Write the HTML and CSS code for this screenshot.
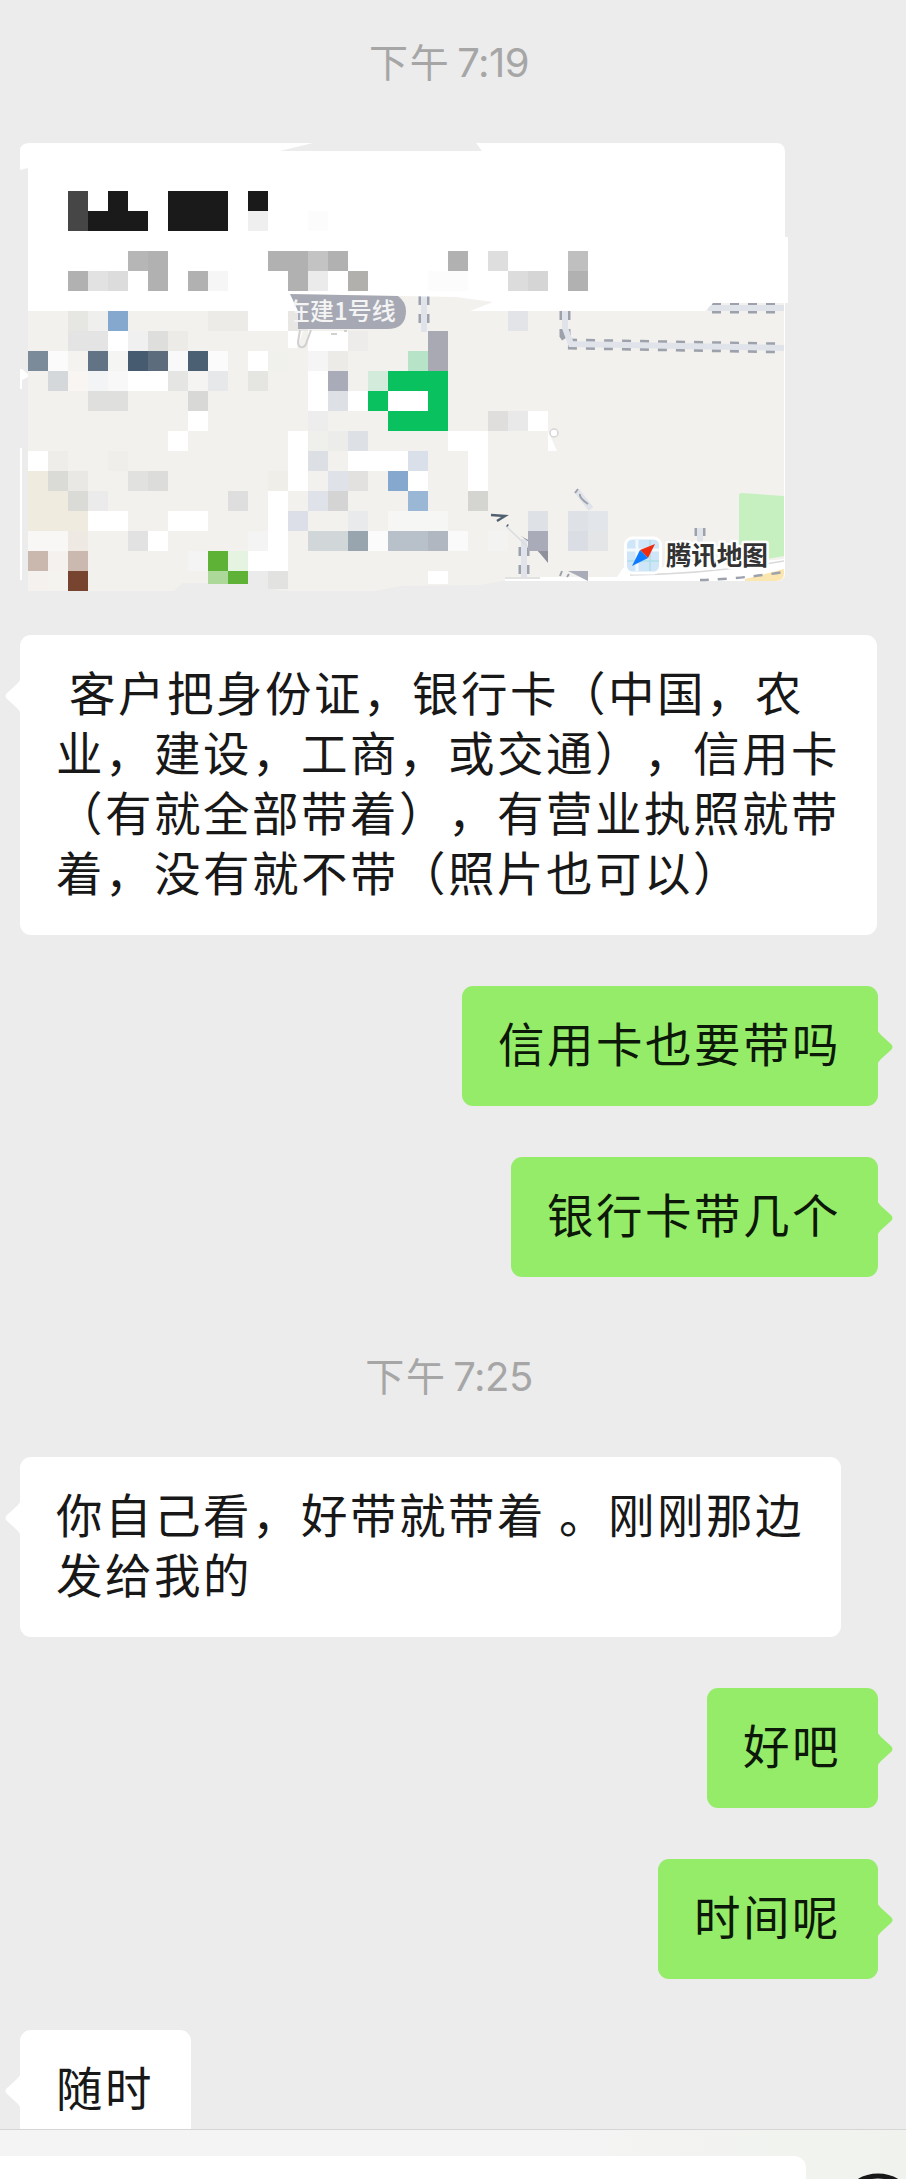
FILE: index.html
```html
<!DOCTYPE html>
<html lang="zh-CN">
<head>
  <meta charset="UTF-8" />
  <title>聊天</title>
  <meta name="viewport" content="width=device-width, initial-scale=1" />
  <link rel="stylesheet" href="styles.css">
</head>
<body>
  <div class="chat">
    <div class="time">下午 <span>7:19</span></div>

    <svg class="location" viewBox="0 143 906 448">
      <!-- map base -->
      <path fill="#fff" d="M20 369h2l8 7-8 4v9h-2zM20 448h2v132h-2zM770 300h15v273q0 8-8 8h-7z"/>
      <path fill="#f2f1ed" d="M28 290H784V573q0 8-8 8H503L480 585L400 586L376 591H288L275 590L268 583H182L174 591H28z"/>
      <path fill="#c7f0c0" d="M739 495q0-2 3-2l42 3v60l-45 8z"/>
      <path fill="#fff" d="M505 577h112l6-9q80 0 161-9v14q0 8-8 8H505z"/>
      <path fill="none" stroke="#d9d9d9" stroke-width="1.5" d="M505 578h35M630 575q80-1 154-14"/>
      <path fill="#fbe6b0" d="M745 579l39-10v4q0 8-8 8h-31z"/>
      <path fill="none" stroke="#9da1ab" stroke-width="2.5" stroke-dasharray="9 9" d="M700 580q40-1 84-8"/>
      <g class="rail-edge">
        <path d="M568 344L784 348"/><path d="M712 308h72"/><path d="M565 311v24l4 6"/>
        <path d="M424 296v36"/><path d="M524 547v30"/><path d="M700 528v8"/>
      </g>
      <g class="rail">
        <path d="M784 348L571 344L565 328V311"/><path d="M708 308h76"/>
        <path d="M424 296v36"/><path d="M524 539v38"/><path d="M700 528v14"/><path d="M577 491l14 18"/>
      </g>
      <path fill="none" stroke="#9da1ab" stroke-width="2" d="M575 493l3-4M580 494q-1 4 8 10M560 576l2-5M567 577l2-3"/>
      <path fill="#8e919c" d="M521 536q12 8 27 27v-12z"/>
      <path fill="none" stroke="#d9dce0" stroke-width="1.5" d="M506 526l25 24"/>
      <path fill="#a9acb8" d="M568 571h20v10z"/>
      <path fill="#fff" d="M548 431l9 20h-9z"/>
      <circle cx="554" cy="433" r="4" fill="#fff" stroke="#d5d5d5" stroke-width="1.5"/>
      <path fill="#fff" d="M288 331h15l-6 17h-9z"/>

      <!-- header of the card -->
      <path fill="#fff" d="M20 151q0-8 10-8H313L280 151H482L476 143H776q9 0 9 9V237h3v66H713L705 311H470L493 302L456 297L290 294L297 306L298 311H28V168L20 170z"/>
      <g id="mosaic"></g>

      <path fill="#a6a9b3" d="M290 294L398 296Q406 302 406 311Q406 329 387 329H298L298 311z"/>
      <svg x="294" y="290" width="120" height="40"><text class="line-name" x="-8" y="29.5">在建1号线</text></svg>
      <path fill="none" stroke="#d0d0d0" stroke-width="2" d="M300 330l-2 12q0 6 5 5q3-1 4-6l4-11M331 334h6M344 331h3"/>
      <path fill="none" stroke="#50606f" stroke-width="2.5" d="M491 515l14 1-8 5M507 525l1 1"/>

      <!-- map vendor mark -->
      <rect x="625.5" y="538" width="35" height="35" rx="7" fill="#cfe5f8" stroke="#fff" stroke-width="3"/>
      <path fill="none" stroke="#f3fafd" stroke-width="3" d="M637 540v31M627 550h32"/>
      <path fill="none" stroke="#aee0e6" stroke-width="1.5" d="M650 540v31M627 561h32"/>
      <path fill="#ef2b10" d="M655 544L648 558L640 550z"/>
      <path fill="#0d7bff" d="M632 566L640 550L648 558z"/>
      <text class="vendor" x="666" y="565" textLength="102">腾讯地图</text>
    </svg>

    <div class="msg left"><svg class="tail" viewBox="0 0 16 36"><path d="M16 0Q15 3 12 6L2 15Q-1 18 2 21L12 30Q15 33 16 36z"/></svg>&nbsp;客户把身份证，银行卡（中国，农<br>业，建设，工商，或交通），信用卡<br>（有就全部带着），有营业执照就带<br>着，没有就不带（照片也可以）</div>
    <div class="msg right"><svg class="tail" viewBox="0 0 16 36"><path d="M16 0Q15 3 12 6L2 15Q-1 18 2 21L12 30Q15 33 16 36z"/></svg>信用卡也要带吗</div>
    <div class="msg right"><svg class="tail" viewBox="0 0 16 36"><path d="M16 0Q15 3 12 6L2 15Q-1 18 2 21L12 30Q15 33 16 36z"/></svg>银行卡带几个</div>

    <div class="time">下午 <span>7:25</span></div>

    <div class="msg left"><svg class="tail" viewBox="0 0 16 36"><path d="M16 0Q15 3 12 6L2 15Q-1 18 2 21L12 30Q15 33 16 36z"/></svg>你自己看，好带就带着&nbsp;。刚刚那边<br>发给我的</div>
    <div class="msg right"><svg class="tail" viewBox="0 0 16 36"><path d="M16 0Q15 3 12 6L2 15Q-1 18 2 21L12 30Q15 33 16 36z"/></svg>好吧</div>
    <div class="msg right"><svg class="tail" viewBox="0 0 16 36"><path d="M16 0Q15 3 12 6L2 15Q-1 18 2 21L12 30Q15 33 16 36z"/></svg>时间呢</div>
    <div class="msg left"><svg class="tail" viewBox="0 0 16 36"><path d="M16 0Q15 3 12 6L2 15Q-1 18 2 21L12 30Q15 33 16 36z"/></svg>随时</div>
  </div>

  <div class="toolbar">
    <div class="field"></div>
    <svg class="emoji" viewBox="0 0 80 80"><circle cx="40" cy="40" r="37" fill="none" stroke="#181818" stroke-width="5"/></svg>
  </div>

  <script>
    // row -> [column, number of cells, color, height]
    const rows = {
      0: [[2,1,'#464646'],[4,1,'#1a1a1a'],[7,3,'#1a1a1a'],[11,1,'#1a1a1a']],
      1: [[2,1,'#464646'],[3,3,'#1a1a1a'],[7,3,'#1a1a1a'],[11,1,'#efefef'],[14,1,'#fcfcfc']],
      3: [[5,1,'#b6b6b6'],[6,1,'#b1b1b1'],[12,2,'#b1b1b1'],[14,1,'#c3c3c3'],[15,1,'#b1b1b1'],[21,1,'#b1b1b1'],[23,1,'#dedede'],[27,1,'#bfbfbf']],
      4: [[2,1,'#b1b1b1'],[3,1,'#e2e2e2'],[4,1,'#dcdcdc'],[6,1,'#b1b1b1'],[8,1,'#b1b1b1'],[9,1,'#f6f6f6'],[13,1,'#b1b1b1'],[14,1,'#ebebeb'],[16,1,'#b1b0ad'],[20,2,'#fcfcfc'],[24,1,'#dcdcdc'],[25,1,'#d5d5d5'],[27,1,'#b1b1b1']],
      6: [[2,1,'#e6e6e2'],[3,1,'#efefee'],[4,1,'#85a8ce'],[9,2,'#ecebe7'],[11,2,'#fff'],[13,1,'#e8e7e4'],[24,1,'#e2e4e8']],
      7: [[2,2,'#e4e4e4'],[4,1,'#fff'],[5,1,'#f0f0f0'],[6,1,'#dededd'],[7,1,'#ecebe8'],[14,2,'#fff'],[16,1,'#edecea'],[20,1,'#a9a9b3']],
      8: [[0,1,'#7c8b9a'],[1,1,'#fbfbfb'],[2,1,'#f4f3f0'],[3,1,'#617384'],[4,1,'#f5f5f4'],[5,1,'#465b70'],[6,1,'#5c6c7c'],[7,1,'#f9f9f9'],[8,1,'#4c6074'],[9,1,'#fbfbfb'],[11,1,'#fff'],[12,1,'#f0f0ed'],[14,1,'#f5f5f5'],[15,1,'#ecebe8'],[19,1,'#b7e4c9'],[20,1,'#a9a9b3']],
      9: [[1,1,'#d5d8da'],[2,1,'#f8f5f3'],[3,1,'#f3f4f6'],[4,1,'#f8f8f8'],[5,2,'#fff'],[7,1,'#e5e5e4'],[8,1,'#f5f4f2'],[9,1,'#e6e8ea'],[11,1,'#e5e5e1'],[14,1,'#fff'],[15,1,'#a9acb8'],[17,1,'#d2ebdb'],[18,3,'#0ac160']],
      10: [[3,2,'#dfdfdd'],[8,1,'#d8d8d7'],[14,1,'#fff'],[15,1,'#dde1e6'],[16,1,'#fff'],[17,1,'#0ac160'],[18,2,'#fff'],[20,1,'#0ac160']],
      11: [[8,1,'#fff'],[14,1,'#ededed'],[18,3,'#0ac160'],[23,1,'#dfdedd'],[24,1,'#e9e9e9'],[25,1,'#fff']],
      12: [[7,1,'#fff'],[13,1,'#fff'],[14,1,'#efefec'],[15,1,'#ececea'],[16,1,'#dde0e5'],[21,2,'#fff']],
      13: [[0,1,'#fff'],[1,1,'#eeede9'],[4,1,'#efeeea'],[13,1,'#fff'],[14,1,'#dce0e4'],[16,3,'#fff'],[19,1,'#dae0ea'],[22,1,'#fff']],
      14: [[0,1,'#efebdf'],[1,1,'#dadad6'],[2,1,'#e9e8e5'],[5,1,'#e1e1e0'],[6,1,'#dcdcda'],[12,1,'#efeee9'],[13,1,'#fff'],[15,1,'#dfe2e8'],[16,1,'#e2e1df'],[18,1,'#85a8ce'],[19,1,'#fff'],[22,1,'#fff']],
      15: [[0,2,'#efebdf'],[2,1,'#dadad6'],[3,1,'#ebebeb'],[10,1,'#dedede'],[12,1,'#fff'],[14,1,'#dfe2e8'],[15,1,'#d5d4d4'],[19,1,'#9bb7d6'],[22,1,'#d4d4d1']],
      16: [[0,3,'#efebdf'],[3,2,'#fff'],[7,2,'#fff'],[12,1,'#fff'],[13,1,'#dcdfe8'],[16,1,'#e8eaec'],[18,3,'#f6f6f4'],[25,1,'#dee1e6'],[27,1,'#dee1e6'],[28,1,'#e2e5e9']],
      17: [[0,2,'#f8f7f5'],[2,1,'#efe9e4'],[5,1,'#e2e2e2'],[6,1,'#fff'],[11,1,'#f4f4f4'],[12,1,'#fff'],[14,2,'#d1d6d9'],[16,1,'#98a4ae'],[17,1,'#fbfbfb'],[18,2,'#b8c0c9'],[20,1,'#b1b7c0'],[21,1,'#fafafa'],[23,1,'#f3f3f2'],[25,1,'#a9acb8'],[27,1,'#dadde3'],[28,1,'#e4e5e7']],
      18: [[0,1,'#cab8ae'],[1,1,'#f4f1ee'],[2,1,'#cbb9af'],[8,1,'#f4f4f4'],[9,1,'#5eb336'],[10,1,'#e4f4e0'],[11,2,'#fff']],
      19: [[0,1,'#f4f1ee'],[1,1,'#f5f3f0'],[2,1,'#774430'],[9,1,'#acd999',13],[10,1,'#5eb336',13],[11,1,'#ebebeb'],[12,1,'#e2e2e0',18],[20,1,'#fff',13]]
    };
    document.getElementById('mosaic').innerHTML = Object.entries(rows).map(([r, cells]) =>
      cells.map(([c, n, color, h]) =>
        `<rect x="${28 + c * 20}" y="${191 + r * 20}" width="${n * 20}" height="${h || 20}" fill="${color}"/>`
      ).join('')
    ).join('');
  </script>
</body>
</html>
```

FILE: styles.css
```css
* { box-sizing: border-box; }
body { margin: 0; height: 2179px; display: flex; flex-direction: column; overflow: hidden; background: #ececec; color: #181818; font-family: "Noto Sans CJK SC", sans-serif; }

.chat { flex: 1; min-height: 0; overflow: hidden; padding: 14px 28px 0 20px; display: flex; flex-direction: column; align-items: flex-start; }
.time { align-self: center; flex: none; height: 129px; padding-top: 16px; line-height: 60px; font-size: 39px; letter-spacing: 1.8px; word-spacing: -4px; color: #a6a6a6; }
.time span { font-family: Inter, sans-serif; font-size: 40px; letter-spacing: -0.5px; }

.msg { position: relative; flex: none; margin-bottom: 51px; padding: 26px 37px 34px 36px; border-radius: 11px; font-size: 46.5px; line-height: 60px; letter-spacing: 2.5px; white-space: nowrap; text-spacing-trim: space-all; }
.left { background: #fff; fill: #fff; }
.right { align-self: flex-end; background: #95ec69; fill: #95ec69; color: #0c1808; }
.tail { position: absolute; top: 43px; left: -15px; width: 16px; height: 36px; }
.right .tail { left: auto; right: -15px; transform: scaleX(-1); }

.location { display: block; flex: none; width: 906px; height: 448px; margin: 0 0 44px -20px; }
.rail { fill: none; stroke: #e0e4ea; stroke-width: 6; }
.rail-edge { fill: none; stroke: #9da1ab; stroke-width: 11; stroke-dasharray: 9 9; }
.line-name { font-size: 24px; fill: #f4f4f4; font-weight: 500; }
.vendor { font-size: 26px; font-weight: 700; fill: #333; stroke: #fff; stroke-width: 5px; stroke-linejoin: round; paint-order: stroke; }

.toolbar { flex: none; height: 50px; border-top: 1px solid #d6d6d6; background: linear-gradient(90deg, #f4f4f4 60%, #f0f3ed); display: flex; overflow: hidden; }
.field { flex: none; width: 806px; margin-top: 26px; background: #fff; border-top-right-radius: 12px; }
.emoji { flex: none; width: 80px; height: 80px; margin: 43px 0 0 32px; }
```
